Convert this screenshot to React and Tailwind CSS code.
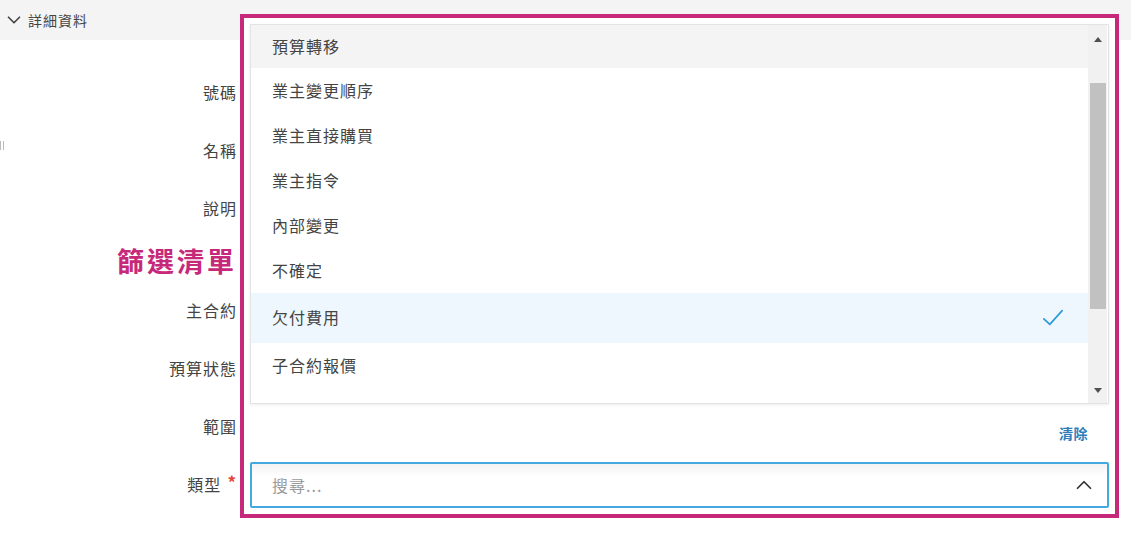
import { ChevronDown, ChevronUp } from "lucide-react";

const labels = ["號碼", "名稱", "說明"];
const labels2 = ["主合約", "預算狀態", "範圍"];

const options = [
  { text: "預算轉移", h: "h-[43px]", hover: true },
  { text: "業主變更順序", h: "h-[45px]" },
  { text: "業主直接購買", h: "h-[45px]" },
  { text: "業主指令", h: "h-[45px]" },
  { text: "內部變更", h: "h-[45px]" },
  { text: "不確定", h: "h-[45px]" },
  { text: "欠付費用", h: "h-[50px]", selected: true },
  { text: "子合約報價", h: "h-[45px]" },
];

const font = { fontFamily: '"Noto Sans CJK TC", "Noto Sans", sans-serif' };

export default function App() {
  return (
    <div
      className="relative w-[1131px] h-[538px] overflow-hidden bg-white text-[#444]"
      style={font}
    >
      {/* Section header */}
      <div className="h-[40px] bg-[#f4f4f4] flex items-center pl-[3px] gap-[3px] text-[14px] tracking-[1px] text-[#444]">
        <ChevronDown size={22} strokeWidth={1.8} />
        <span>詳細資料</span>
      </div>

      {/* resize handle */}
      <div className="absolute left-0 top-[141px] flex gap-[2px]">
        <div className="w-[1px] h-[9px] bg-[#bbb]" />
        <div className="w-[1px] h-[9px] bg-[#bbb]" />
      </div>

      {/* Form labels */}
      <div className="w-[237px] pt-[23px] flex flex-col text-[16px] tracking-[1px]">
        {labels.map((l) => (
          <div key={l} className="h-[58px] flex items-center justify-end">
            {l}
          </div>
        ))}
        <div className="h-[44px] flex items-center justify-end text-[27px] tracking-[3px] font-bold text-[#c7297a] leading-none pt-[3px]">
          篩選清單
        </div>
        {labels2.map((l) => (
          <div key={l} className="h-[58px] flex items-center justify-end">
            {l}
          </div>
        ))}
        <div className="h-[58px] flex items-center justify-end">
          類型
          <span className="text-[#e5453a] text-[17px] font-bold ml-[6px] -mt-[5px] leading-none">*</span>
        </div>
      </div>

      {/* Dropdown overlay with highlight frame */}
      <div className="absolute left-[240px] top-[14px] w-[879px] h-[504px] border-4 border-[#c7297a] bg-white p-[6px] flex flex-col">
        {/* List */}
        <div className="h-[380px] flex border border-[#e3e3e3] bg-white shadow-[0_1px_3px_rgba(0,0,0,0.08)]">
          <div className="flex-1 flex flex-col">
            {options.map((o) => (
              <div
                key={o.text}
                className={`${o.h} flex items-center justify-between pl-[21px] pr-[24px] text-[16px] tracking-[1px] text-[#444] ${
                  o.hover ? "bg-[#f4f4f4]" : o.selected ? "bg-[#eef7fd]" : ""
                }`}
              >
                <span className="-mt-[2px]">{o.text}</span>
                {o.selected && (
                  <svg width="22" height="22" viewBox="0 0 24 24" fill="none" stroke="#2a9ad6" strokeWidth="1.8" strokeLinecap="round" strokeLinejoin="round">
                    <path d="M2 13l6.5 6L22 4" />
                  </svg>
                )}
              </div>
            ))}
          </div>
          {/* Scrollbar */}
          <div className="w-[19px] mr-[1px] bg-[#f1f1f1] flex flex-col items-center">
            <div className="h-[28px] flex items-center justify-center">
              <div className="w-0 h-0 border-l-[4px] border-r-[4px] border-b-[5px] border-l-transparent border-r-transparent border-b-[#505050]" />
            </div>
            <div className="w-[16px] h-[226px] mt-[30px] bg-[#c1c1c1]" />
            <div className="flex-1" />
            <div className="h-[26px] flex items-center justify-center">
              <div className="w-0 h-0 border-l-[4px] border-r-[4px] border-t-[5px] border-l-transparent border-r-transparent border-t-[#505050]" />
            </div>
          </div>
        </div>

        {/* Footer */}
        <div className="h-[58px] flex items-center justify-end pr-[21px]">
          <span className="text-[14px] font-semibold tracking-[0.5px] text-[#2f7dbb]">清除</span>
        </div>

        {/* Search input */}
        <div className="h-[46px] flex items-center justify-between border-2 border-[#44a9de] rounded-[2px] bg-gradient-to-b from-[#f3f3f3] to-white to-[30%] pl-[20px] pr-[10px]">
          <span className="text-[16px] tracking-[1px] text-[#9a9a9a]">搜尋...</span>
          <ChevronUp size={26} strokeWidth={1.6} className="text-[#333]" />
        </div>
      </div>
    </div>
  );
}
